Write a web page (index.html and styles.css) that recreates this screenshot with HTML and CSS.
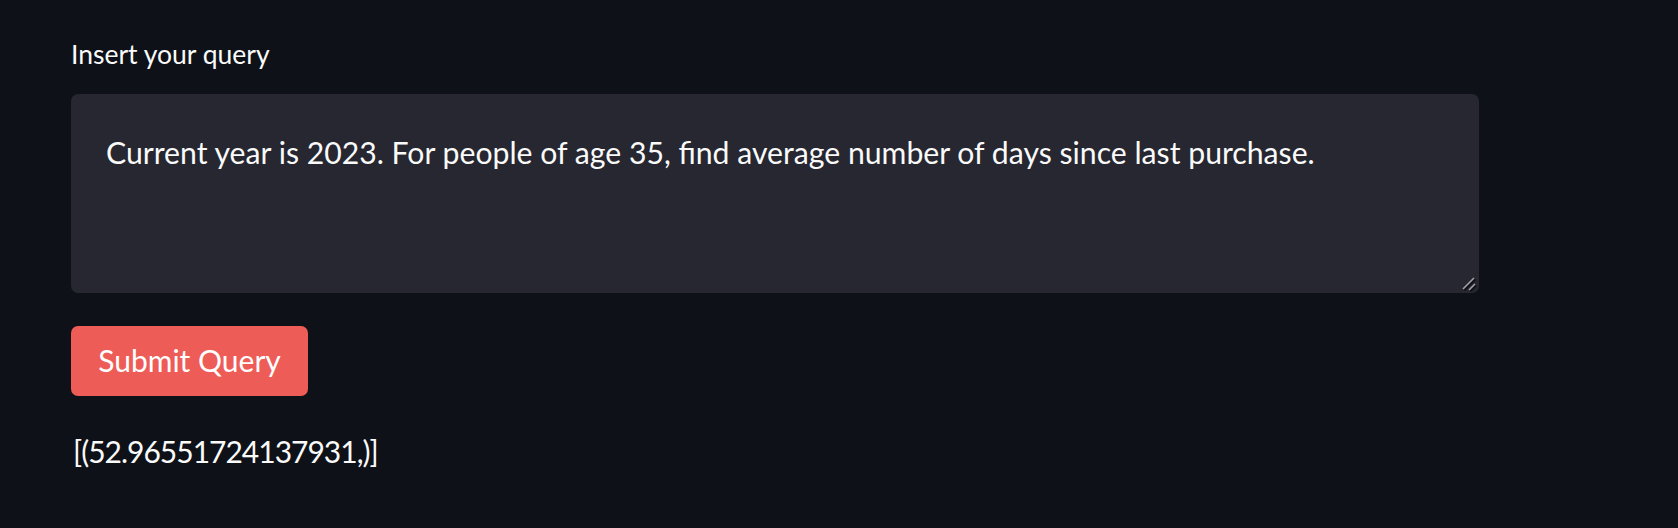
FILE: index.html
```html
<!DOCTYPE html>
<html lang="en">
<head>
<meta charset="utf-8">
<title>Query</title>
<link rel="stylesheet" href="styles.css">
</head>
<body>
<main class="app">
  <label class="field-label" for="query">Insert your query</label>
  <div class="query-wrap">
    <textarea id="query" class="query-box">Current year is 2023. For people of age 35, find average number of days since last purchase.</textarea>
    <svg class="grip" width="16" height="16" viewBox="0 0 16 16" aria-hidden="true">
      <line x1="3" y1="14" x2="14" y2="3" stroke="#111217" stroke-width="3"/>
      <line x1="2" y1="13" x2="13" y2="2" stroke="#a3a3a8" stroke-width="1.6"/>
      <line x1="9" y1="15" x2="15" y2="9" stroke="#111217" stroke-width="3"/>
      <line x1="8" y1="14" x2="14" y2="8" stroke="#a3a3a8" stroke-width="1.6"/>
    </svg>
  </div>
  <button class="submit-btn" type="button">Submit Query</button>
  <p class="result">[(52.96551724137931,)]</p>
</main>
</body>
</html>
```
FILE: styles.css
```css
html, body {
  margin: 0;
  padding: 0;
  background: #0e1117;
  color-scheme: dark;
}
body {
  font-family: "Lato", "Noto Sans", sans-serif;
  color: #fafafa;
}
.app {
  display: flex;
  flex-direction: column;
  align-items: flex-start;
  padding: 38px 0 0 71px;
  width: 1408px;
}
.field-label {
  font-size: 26.5px;
  line-height: 32px;
  color: #fafafa;
}
.query-wrap {
  position: relative;
  margin-top: 24px;
  width: 1408px;
  height: 199px;
}
.query-box {
  display: block;
  box-sizing: border-box;
  width: 100%;
  height: 100%;
  background: #262730;
  border: none;
  border-radius: 7px;
  padding: 40px 35px 30px;
  font-family: inherit;
  font-size: 30.2px;
  line-height: 36px;
  color: #fafafa;
  resize: none;
  outline: none;
}
.grip {
  position: absolute;
  right: 2px;
  bottom: 1px;
}
.submit-btn {
  margin-top: 33px;
  width: 237px;
  height: 70px;
  background: #ee5c57;
  border: none;
  border-radius: 7px;
  color: #ffffff;
  font-family: inherit;
  font-size: 30px;
  padding: 0 0 2px;
}
.result {
  margin: 37px 0 0 2px;
  font-size: 30px;
  line-height: 36px;
  letter-spacing: -1px;
}
```
